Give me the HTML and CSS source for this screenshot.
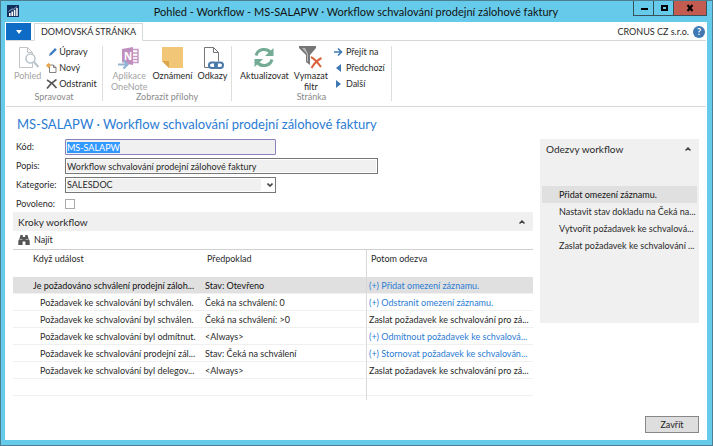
FILE: index.html
```html
<!DOCTYPE html>
<html lang="cs">
<head>
<meta charset="utf-8">
<meta name="viewport" content="width=device-width, initial-scale=1">
<title>Pohled - Workflow</title>
<link rel="stylesheet" href="styles.css">
</head>
<body>
<div class="window">
  <header class="titlebar">
    <svg class="app-icon" viewBox="0 0 12 12" aria-hidden="true"><path fill="#14305f" d="M0 0h12v12H0z"/><path fill="#fff" d="M2 8h1.600v3H2zM4.400 6.500H6V11H4.400zM6.800 5h1.600v6H6.800zM9.200 3h1.500v8H9.200z"/><path fill="none" stroke="#b8cbe4" stroke-width=".8" d="M1.500 6.500 5 4l2 .2L10 1.500"/></svg>
    <h1 class="title">Pohled - Workflow - MS-SALAPW · Workflow schvalování prodejní zálohové faktury</h1>
    <div class="controls">
      <button class="control" aria-label="Minimalizovat"><svg viewBox="0 0 10 8"><path fill="#000" d="M2 4h7v2H2z"/></svg></button>
      <button class="control" aria-label="Maximalizovat"><svg viewBox="0 0 10 8"><path fill="none" stroke="#000" stroke-width="2" d="M3 2h5v4H3z"/></svg></button>
      <button class="control control-close" aria-label="Zavřít okno"><svg viewBox="0 0 10 8"><path fill="none" stroke="#000" stroke-width="2" d="m2.500 1 5 6m0-6-5 6"/></svg></button>
    </div>
  </header>

  <div class="client">
    <nav class="tabs">
      <button class="file-tab" aria-label="Nabídka aplikace"><svg viewBox="0 0 6 4"><path fill="#fff" d="M0 0h6L3 4z"/></svg></button>
      <button class="tab">DOMOVSKÁ STRÁNKA</button>
      <span class="company">CRONUS CZ s.r.o.</span>
      <button class="help" aria-label="Nápověda">?</button>
    </nav>

    <div class="ribbon">
      <section class="group group-manage">
        <div class="actions">
          <button class="big muted" disabled>
            <svg viewBox="0 0 24 24"><path fill="#fff" stroke="#c4c4c4" d="M3.500 1.500h8l5 5v15h-13zM11.500 1.500v5h5"/><circle cx="14.500" cy="12.500" r="4.500" fill="#fff" stroke="#b8c4cc" stroke-width="1.500"/><path stroke="#b8c4cc" stroke-width="2" d="m18 16 4.500 5"/></svg>
            Pohled
          </button>
          <div class="stack">
            <button class="small"><svg viewBox="0 0 12 10"><path fill="#3f7dc0" d="m3 9 .8-2.600L9 1l1.800 1.700L5.500 8z"/></svg>Úpravy</button>
            <button class="small"><svg viewBox="0 0 12 10"><path fill="#fff" stroke="#666" stroke-width=".8" d="M3.500 2h4l2.500 2.500v5H3.500zM7.500 2v2.500H10"/><path stroke="#eba94b" stroke-width="1" d="M2.500 0v5M0 2.500h5M.8.8l3.400 3.400M4.200.8.8 4.200"/></svg>Nový</button>
            <button class="small"><svg viewBox="0 0 12 10"><path fill="none" stroke="#555" stroke-width="1.600" d="M1 1c4 2 7 5 9.500 8M10.500.5C6 3 3.500 6 1 9.500"/></svg>Odstranit</button>
          </div>
        </div>
        <h2 class="group-name">Spravovat</h2>
      </section>
      <section class="group group-attach">
        <div class="actions">
          <button class="big muted" disabled>
            <svg viewBox="0 0 24 24"><path fill="#fff" stroke="#c79bc5" stroke-width="1.500" d="M14 3.500h7v13h-7M16 7h5m-5 3.500h5m-5 3h5"/><path fill="#c08fbe" d="m5 3 11-2v18L5 17z"/><text x="7" y="14" class="one-note">N</text><path fill="none" stroke="#fff" stroke-width="4" d="M0 18.500h9"/><path fill="none" stroke="#91b3d2" stroke-width="2.200" d="M1 18.500h9M6.500 14.500l4 4-4 4"/></svg>
            Aplikace<br>OneNote
          </button>
          <button class="big">
            <svg viewBox="0 0 24 24"><path fill="#f1c777" d="M2 1h21v21H9l-7-7z"/><path fill="#dca64a" d="M2 15h7v7z"/></svg>
            Oznámení
          </button>
          <button class="big">
            <svg viewBox="0 0 24 24"><path fill="#fff" stroke="#777" d="M4.500 1.500h9l5 5v15h-14zM13.500 1.500v5h5"/><path stroke="#fff" stroke-width="8" d="M9 19h15"/><g fill="none" stroke="#4778a9" stroke-width="2"><rect x="9" y="16.500" width="8" height="5.500" rx="2.700"/><rect x="15" y="16.500" width="8" height="5.500" rx="2.700"/></g></svg>
            Odkazy
          </button>
        </div>
        <h2 class="group-name">Zobrazit přílohy</h2>
      </section>
      <section class="group group-page">
        <div class="actions">
          <button class="big">
            <svg viewBox="0 0 24 24"><g fill="none" stroke="#74ab94" stroke-width="3"><path d="M4 9.500c2-7 11-8 15-2.500"/><path d="M20 13.500c-2 7-11 8-15 2.500"/></g><path fill="#74ab94" d="M21.500 2v8H13zM2.500 21v-8H11z"/></svg>
            Aktualizovat
          </button>
          <button class="big">
            <svg viewBox="0 0 24 24"><path fill="#777" d="M0 0h17v2l-6 7v10l-4-3V9L0 2z"/><path fill="#bbb" d="M3 2h3l3 6v8l-1-1V8z"/><path fill="none" stroke="#d9643f" stroke-width="2" d="M12 11c4 2 7 6 10 10M22.500 12c-4 2-7 5-10 10"/></svg>
            Vymazat<br>filtr
          </button>
          <div class="stack">
            <button class="small"><svg viewBox="0 0 12 10"><path fill="none" stroke="#3f78b3" stroke-width="1.600" d="M1 5h7M5 1.500 8.500 5 5 8.500"/></svg>Přejít na</button>
            <button class="small"><svg viewBox="0 0 12 10"><path fill="#3f78b3" d="M8 1v8L3 5z"/></svg>Předchozí</button>
            <button class="small"><svg viewBox="0 0 12 10"><path fill="#3f78b3" d="M3 1v8l5-4z"/></svg>Další</button>
          </div>
        </div>
        <h2 class="group-name">Stránka</h2>
      </section>
    </div>

    <main class="page">
      <h2 class="page-title">MS-SALAPW · Workflow schvalování prodejní zálohové faktury</h2>
      <div class="columns">
        <div class="primary">
          <form class="fields">
            <label for="code">Kód:</label>
            <input class="field field-code" id="code" value="MS-SALAPW" readonly>
            <label for="description">Popis:</label>
            <input class="field field-wide" id="description" value="Workflow schvalování prodejní zálohové faktury" readonly>
            <label for="category">Kategorie:</label>
            <div class="select-box">
              <select class="field" id="category"><option>SALESDOC</option></select>
              <svg class="select-arrow" viewBox="0 0 6 4"><path fill="none" stroke="#444" stroke-width="1.600" d="m.5.5 2.500 2.500L5.500.5"/></svg>
            </div>
            <label for="enabled">Povoleno:</label>
            <input class="check" id="enabled" type="checkbox">
          </form>

          <section class="steps">
            <button class="bar">Kroky workflow<svg viewBox="0 0 6 4"><path fill="none" stroke="#444" stroke-width="1.500" d="M.5 3.500 3 1l2.500 2.500"/></svg></button>
            <button class="find"><svg viewBox="0 0 12 10"><path fill="#555" d="M2.500 0h2.300v2h2.400V0h2.300l.8 3 1.400 3v4H7.400V6.500H4.600V10H.3V6l1.400-3z"/><path stroke="#ddd" stroke-width=".6" d="M1.500 4.500h3m3 0h3"/></svg>Najít</button>
            <table class="grid">
              <colgroup><col class="col-event"><col class="col-condition"><col></colgroup>
              <thead><tr><th>Když událost</th><th>Předpoklad</th><th>Potom odezva</th></tr></thead>
              <tbody>
                <tr class="selected"><td>Je požadováno schválení prodejní záloh...</td><td>Stav: Otevřeno</td><td><a href="#">(+) Přidat omezení záznamu.</a></td></tr>
                <tr><td>Požadavek ke schvalování byl schválen.</td><td>Čeká na schválení: 0</td><td><a href="#">(+) Odstranit omezení záznamu.</a></td></tr>
                <tr><td>Požadavek ke schvalování byl schválen.</td><td>Čeká na schválení: &gt;0</td><td>Zaslat požadavek ke schvalování pro zá...</td></tr>
                <tr><td>Požadavek ke schvalování byl odmítnut.</td><td>&lt;Always&gt;</td><td><a href="#">(+) Odmítnout požadavek ke schvalová...</a></td></tr>
                <tr><td>Požadavek ke schvalování prodejní zál...</td><td>Stav: Čeká na schválení</td><td><a href="#">(+) Stornovat požadavek ke schvalován...</a></td></tr>
                <tr><td>Požadavek ke schvalování byl delegov...</td><td>&lt;Always&gt;</td><td>Zaslat požadavek ke schvalování pro zá...</td></tr>
                <tr><td></td><td></td><td></td></tr>
                <tr class="tail"><td></td><td></td><td></td></tr>
              </tbody>
            </table>
          </section>
        </div>

        <aside class="factbox">
          <button class="bar">Odezvy workflow<svg viewBox="0 0 6 4"><path fill="none" stroke="#444" stroke-width="1.500" d="M.5 3.500 3 1l2.500 2.500"/></svg></button>
          <ul class="responses">
            <li class="selected">Přidat omezení záznamu.</li>
            <li>Nastavit stav dokladu na Čeká na...</li>
            <li>Vytvořit požadavek ke schvalová...</li>
            <li>Zaslat požadavek ke schvalování ...</li>
          </ul>
        </aside>
      </div>
      <footer class="footer"><button class="close">Zavřít</button></footer>
    </main>
  </div>
</div>
<script src="script.js"></script>
</body>
</html>
```
FILE: styles.css
```css
* { box-sizing: border-box; }

body {
  margin: 0;
  font: 9px/12px Lato, "Open Sans", sans-serif;
  color: #2a2a2a;
  background: #66cbea;
}

h1, h2, ul { margin: 0; padding: 0; font-weight: 400; list-style: none; }

button, input, select { font: inherit; color: inherit; border-radius: 0; }

button { padding: 0; border: 0; background: none; white-space: nowrap; }

a { color: #2b7cd3; text-decoration: none; }

.window {
  display: flex;
  flex-direction: column;
  min-height: 100vh;
  padding: 0 5px 5px 4px;
  border: 1px solid #4c7f92;
  background: #66cbea;
}

.titlebar {
  display: grid;
  grid-template-columns: 1fr auto 1fr;
  align-items: start;
  height: 21px;
}

.app-icon { width: 12px; height: 12px; margin: 4px 0 0 2px; }

.title {
  font-size: 11px;
  line-height: 21px;
  color: #111;
  white-space: nowrap;
}

.controls { display: flex; justify-self: end; border: 1px solid #38525c; border-top: 0; }

.control { width: 20px; height: 14px; border-right: 1px solid #38525c; }

.control svg { display: block; width: 10px; height: 8px; margin: 0 auto; }

.control-close { width: 32px; border-right: 0; background: #c35b50; }

.client {
  display: flex;
  flex: 1;
  flex-direction: column;
  padding: 0 1px;
  background: #fff;
}

.tabs {
  display: flex;
  align-items: center;
  height: 19px;
  padding-top: 1px;
  border-bottom: 1px solid #d5d7d9;
}

.file-tab { width: 25px; height: 17px; background: #0f6cc6; }

.file-tab svg { display: block; width: 6px; height: 4px; margin: 0 auto; }

.tab {
  height: 18px;
  margin: 0 auto -1px 3px;
  padding: 0 6px;
  border: 1px solid #d5d7d9;
  border-bottom-color: #fff;
  background: #fff;
}

.help {
  width: 12px;
  height: 12px;
  margin: 0 1px 0 4px;
  border-radius: 50%;
  background: #3f78b3;
  color: #fff;
  font-weight: 700;
  line-height: 12px;
}

.ribbon {
  display: flex;
  height: 66px;
  padding: 5px 0;
  border-bottom: 1px solid #d5d7d9;
}

.group {
  display: flex;
  flex-direction: column;
  justify-content: space-between;
  border-right: 1px solid #dedede;
}

.group-manage { width: 97px; padding-left: 8px; }
.group-attach { width: 129px; padding-left: 8px; }
.group-page { width: 160px; padding-left: 8px; }

.actions { display: flex; gap: 5px; align-items: flex-start; height: 46px; }

.group-name {
  padding-right: 8px;
  font-size: 9px;
  line-height: 10px;
  color: #8a8a8a;
  text-align: center;
}

.big { display: block; line-height: 11px; }

.big svg { display: block; width: 24px; height: 24px; margin: 0 auto; }

.muted { color: #a3a3a3; }

.one-note { font: 700 10px "Open Sans", sans-serif; fill: #fff; }

.stack { display: flex; flex-direction: column; }

.small { display: flex; gap: 1px; align-items: center; height: 16px; padding-bottom: 4px; }

.small svg { width: 12px; height: 10px; }

.page { display: flex; flex: 1; flex-direction: column; padding: 8px 7px 7px; }

.page-title {
  padding-left: 4px;
  font-size: 13px;
  line-height: 18px;
  color: #2b7cd3;
}

.columns {
  display: grid;
  grid-template-columns: minmax(0, 1fr) 159px;
  gap: 7px;
  align-items: start;
  padding-top: 6px;
}

.fields {
  display: grid;
  grid-template-columns: 49px minmax(0, 1fr);
  gap: 3px 0;
  align-items: center;
  padding-left: 3px;
}

.field {
  width: 211px;
  height: 16px;
  padding: 0 2px;
  border: 1px solid #777;
  background: #f0f0f0;
  box-shadow: inset 0 0 0 1px #fff;
  outline: 0;
  appearance: none;
}

.field-code { padding: 0 1px; border-color: #8a83bb; border-radius: 1px; box-shadow: none; }

.field-code::selection { background: #3399ff; color: #fff; }

.field-wide { width: 313px; padding: 0 1px; }

.select-box { position: relative; width: 211px; height: 16px; }

.select-box .field {
  display: block;
  padding: 0 1px;
  background: linear-gradient(90deg, #f0f0f0 195px, #fff 195px);
}

.select-arrow { position: absolute; top: 6px; right: 3px; width: 6px; height: 4px; }

.check {
  width: 10px;
  height: 10px;
  margin: 3px 0;
  border: 1px solid #aaa;
  background: #fff;
  appearance: none;
}

.bar {
  display: flex;
  align-items: center;
  justify-content: space-between;
  width: 100%;
  height: 19px;
  padding: 0 8px 0 5px;
  background: #f0f0f0;
  font-size: 10px;
}

.bar svg { width: 6px; height: 4px; }

.find { display: flex; gap: 4px; align-items: center; height: 18px; padding-left: 5px; }

.find svg { width: 12px; height: 10px; }

.grid { width: 100%; border-collapse: separate; border-spacing: 0; table-layout: fixed; border-top: 1px solid #d0d0d0; }

.col-event { width: 190px; }
.col-condition { width: 164px; }

.grid th {
  height: 27px;
  padding: 3px 0 0 4px;
  font-weight: 400;
  text-align: left;
  vertical-align: top;
}

.grid td {
  height: 17px;
  padding: 2px 0 0 2px;
  border-bottom: 1px solid #f0f0f0;
  white-space: nowrap;
}

.grid th:first-child { padding-left: 20px; }
.grid td:first-child { padding-left: 27px; }

.grid th:nth-child(2), .grid td:nth-child(2) { border-right: 1px solid #d8d8d8; }

.grid .selected td { background: #e0e0e0; color: #111; }
.grid .selected td:first-child { padding-left: 20px; }

.grid .tail td { height: 4px; border-bottom: 0; }

.factbox { min-height: 184px; background: #f0f0f0; }

.factbox .bar { padding: 0 8px 0 6px; }

.responses { padding: 28px 2px 0; }

.responses li { height: 17px; padding-left: 17px; line-height: 17px; white-space: nowrap; }

.responses .selected { background: #e0e0e0; color: #111; }

.footer { display: flex; justify-content: flex-end; margin-top: auto; }

.close { width: 54px; height: 17px; border: 1px solid #888; background: #dedede; color: #222; }
```
FILE: script.js
```js
const code = document.getElementById("code");
code.focus();
code.select();
```
